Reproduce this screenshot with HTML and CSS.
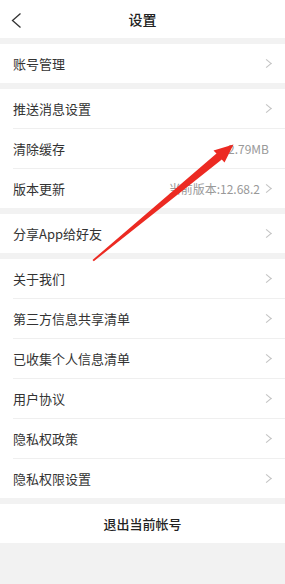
FILE: index.html
```html
<!DOCTYPE html>
<html lang="zh-CN">
<head>
<meta charset="utf-8">
<link rel="stylesheet" href="styles.css">
</head>
<body>
<div class="page">
  <header class="topbar">
    <svg class="back" width="12" height="18" viewBox="0 0 12 18"><polyline points="9.5,1.5 1.5,8.5 9.5,15.5" fill="none" stroke="#333" stroke-width="1.3"/></svg>
    <div class="title">设置</div>
  </header>
  <div class="band"></div>
  <div class="group">
    <div class="row"><span class="label">账号管理</span><span class="chev"></span></div>
  </div>
  <div class="band"></div>
  <div class="group">
    <div class="row"><span class="label">推送消息设置</span><span class="chev"></span></div>
    <div class="row"><span class="label">清除缓存</span><span class="value plain">2.79MB</span></div>
    <div class="row"><span class="label">版本更新</span><span class="value">当前版本:12.68.2</span><span class="chev"></span></div>
  </div>
  <div class="band"></div>
  <div class="group">
    <div class="row"><span class="label">分享App给好友</span><span class="chev"></span></div>
  </div>
  <div class="band"></div>
  <div class="group">
    <div class="row"><span class="label">关于我们</span><span class="chev"></span></div>
    <div class="row"><span class="label">第三方信息共享清单</span><span class="chev"></span></div>
    <div class="row"><span class="label">已收集个人信息清单</span><span class="chev"></span></div>
    <div class="row"><span class="label">用户协议</span><span class="chev"></span></div>
    <div class="row"><span class="label">隐私权政策</span><span class="chev"></span></div>
    <div class="row"><span class="label">隐私权限设置</span><span class="chev"></span></div>
  </div>
  <div class="band"></div>
  <div class="logout">退出当前帐号</div>
  <div class="filler"></div>
  <svg class="arrow" width="285" height="584" viewBox="0 0 285 584"><polygon points="92.5,260 216.5,153.4 213.5,150.5 233.5,144.5 224.5,162.5 221.8,159.5 93.8,261.2" fill="#ec2a22"/></svg>
</div>
</body>
</html>
```
FILE: styles.css
```css
* { box-sizing: border-box; }
html, body { margin: 0; padding: 0; }
body {
  width: 285px;
  height: 584px;
  background: #f2f2f2;
  font-family: "Noto Sans CJK SC", "Noto Sans", sans-serif;
  color: #333;
  overflow: hidden;
}
.page {
  position: relative;
  display: flex;
  flex-direction: column;
  height: 584px;
}
.topbar {
  height: 38px;
  background: #fff;
  display: flex;
  align-items: center;
  justify-content: center;
  position: relative;
}
.back {
  position: absolute;
  left: 11px;
  top: 12px;
}
.title {
  font-size: 14px;
  font-weight: 500;
  color: #222;
}
.band {
  height: 6px;
  background: #f2f2f2;
}
.group {
  background: #fff;
  padding-left: 13px;
}
.row {
  height: 40px;
  display: flex;
  align-items: center;
  padding-right: 13px;
  border-bottom: 1px solid #efefef;
}
.row:last-child {
  height: 39px;
  border-bottom: none;
}
.label {
  font-size: 13px;
  flex: 1;
  color: #333;
}
.value {
  font-size: 12px;
  color: #999;
  margin-right: 6px;
}
.value.plain {
  margin-right: 3px;
}
.chev {
  width: 6px;
  height: 10px;
  position: relative;
}
.chev::before {
  content: "";
  position: absolute;
  left: -3px;
  top: 1px;
  width: 6px;
  height: 6px;
  border-top: 1px solid #c4c4c4;
  border-right: 1px solid #c4c4c4;
  transform: rotate(45deg) skew(-5deg, -5deg);
}
.logout {
  height: 39px;
  background: #fff;
  display: flex;
  align-items: center;
  justify-content: center;
  font-size: 13px;
  font-weight: 500;
  color: #222;
}
.filler {
  flex: 1;
  background: #f2f2f2;
}
.arrow {
  position: absolute;
  left: 0;
  top: 0;
  pointer-events: none;
}
```
